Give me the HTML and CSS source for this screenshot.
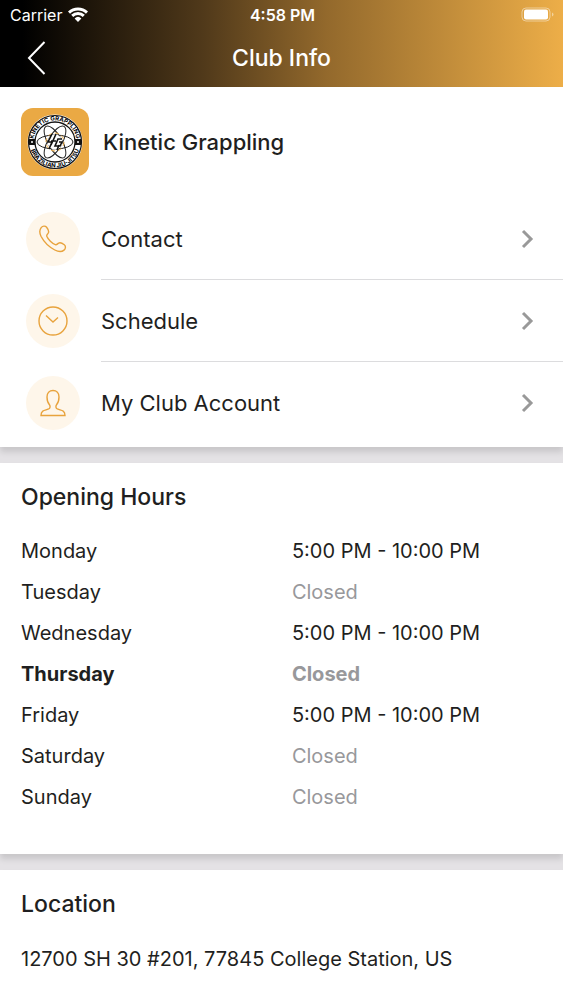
FILE: index.html
```html
<!DOCTYPE html>
<html lang="en">

<head>
    <meta charset="UTF-8">
    <meta name="viewport" content="width=device-width, initial-scale=1">
    <title>Club Info</title>
    <link rel="stylesheet" href="styles.css">
</head>

<body>
    <header>
        <div class="status-bar">
            <div class="carrier">
                <span>Carrier</span>
                <svg width="20" height="15" viewBox="0 0 20 15" fill="none" stroke="#fff" stroke-width="3">
                    <path d="M1 5.6a13 13 0 0 1 18 0M4.2 8.9a8.4 8.4 0 0 1 11.6 0" />
                    <path d="M10 15l-3.4-3.6a5 5 0 0 1 6.8 0z" fill="#fff" stroke="none" />
                </svg>
            </div>
            <time>4:58 PM</time>
            <div class="battery">
                <svg width="34" height="15" viewBox="0 0 34 15">
                    <rect x="1" y="1" width="28" height="13" rx="4" fill="none" stroke="#fff" stroke-opacity=".45" />
                    <rect x="3" y="2.500" width="24" height="10" rx="2" fill="#fff" />
                    <path d="M31 5.5v4q1.500-.5 1.500-2t-1.500-2z" fill="#fff" fill-opacity=".45" />
                </svg>
            </div>
        </div>
        <div class="nav-bar">
            <button class="back" aria-label="Back">
                <svg width="20" height="34" viewBox="0 0 20 34" fill="none" stroke="#fff" stroke-width="2">
                    <path d="M17.500 1L2 17l15.500 16" />
                </svg>
            </button>
            <h1>Club Info</h1>
        </div>
    </header>

    <main>
        <!-- Club -->
        <section class="card">
            <div class="club">
                <svg class="club-logo" viewBox="0 0 68 68">
                    <defs>
                        <path id="ring-top" d="M12.500 34a21.500 21.500 0 0 1 43 0" />
                        <path id="ring-bottom" d="M8.500 34a25.500 25.500 0 0 0 51 0" />
                    </defs>
                    <rect width="68" height="68" rx="12" fill="#eaa944" />
                    <circle cx="34" cy="34" r="27.500" fill="#fff" />
                    <circle cx="34" cy="34" r="26.500" fill="none" stroke="#111" stroke-width="1.200" />
                    <circle cx="34" cy="34" r="20" fill="none" stroke="#111" stroke-width="1.300" />
                    <rect x="8" y="31" width="6" height="6" fill="#111" />
                    <rect x="54" y="31" width="6" height="6" fill="#111" />
                    <circle cx="11" cy="34" r="1" fill="#fff" />
                    <circle cx="57" cy="34" r="1" fill="#fff" />
                    <text class="ring-text"><textPath href="#ring-top" startOffset="50%">KINETIC GRAPPLING</textPath></text>
                    <text class="ring-text"><textPath href="#ring-bottom" startOffset="50%">BRAZILIAN JIU-JITSU</textPath></text>
                    <g fill="none" stroke="#222" stroke-width="1">
                        <ellipse cx="34" cy="34" rx="18" ry="7" />
                        <ellipse cx="34" cy="34" rx="18" ry="7" transform="rotate(60 34 34)" />
                        <ellipse cx="34" cy="34" rx="18" ry="7" transform="rotate(120 34 34)" />
                    </g>
                    <circle cx="34" cy="34" r="7.500" fill="#fff" />
                    <circle cx="34" cy="34" r="9" fill="none" stroke="#eaa944" stroke-dasharray="4 3" />
                    <path d="M31 26l-4 8h4l-3 7M35 26l-5 11M30 33h5M41 31h-4l-3 7h5l2-4h-3M38 37l-2 5" fill="none" stroke="#111" stroke-width="1.600" />
                </svg>
                <h2>Kinetic Grappling</h2>
            </div>
            <nav class="menu">
                <a href="#contact">
                    <span class="icon">
                        <svg width="28" height="28" viewBox="0 0 28 28">
                            <path d="M2.200 2.600C3.700.9 6.200.6 7.600 2.300c1.500 1.900 2.700 4 1.700 5.700-.8 1.300-2 1.900-1.500 3.300 1.200 3.100 5.400 7.200 8.500 8.300 1.500.5 2.100-.8 3.400-1.500 1.800-1 3.700.2 5.600 1.700 1.700 1.400 1.400 3.900-.3 5.300-2.500 2.200-6 1.600-9.200-.1C9.500 21.700 4.800 16.700 2 11.300.6 8.300.2 5 2.200 2.600z" />
                        </svg>
                    </span>
                    <span class="label">Contact
                        <svg class="chevron" width="13" height="20" viewBox="0 0 13 20"><path d="M2 2l8 8-8 8" /></svg>
                    </span>
                </a>
                <a href="#schedule">
                    <span class="icon">
                        <svg width="30" height="30" viewBox="0 0 30 30">
                            <circle cx="15" cy="15" r="14" />
                            <path d="M8 9.500l7 6.500 5-4.500" />
                        </svg>
                    </span>
                    <span class="label">Schedule
                        <svg class="chevron" width="13" height="20" viewBox="0 0 13 20"><path d="M2 2l8 8-8 8" /></svg>
                    </span>
                </a>
                <a href="#account">
                    <span class="icon">
                        <svg width="26" height="28" viewBox="0 0 26 28">
                            <path d="M13 1.500c3.600 0 6 2.600 6 6.500 0 3.200-.8 6-2.600 8-.6.700-.7 2.700.2 3.500 1.700 1.200 4.800 1.500 6.600 2.600 1.300.8 1.800 2.200 1.800 4.400H1c0-2.200.5-3.600 1.800-4.400 1.800-1.100 4.900-1.400 6.600-2.600.9-.8.8-2.800.2-3.500C7.800 14 7 11.200 7 8c0-3.900 2.400-6.500 6-6.500z" />
                        </svg>
                    </span>
                    <span class="label">My Club Account
                        <svg class="chevron" width="13" height="20" viewBox="0 0 13 20"><path d="M2 2l8 8-8 8" /></svg>
                    </span>
                </a>
            </nav>
        </section>

        <!-- Opening hours -->
        <section class="card hours">
            <h2>Opening Hours</h2>
            <table>
                <tr>
                    <th scope="row">Monday</th>
                    <td>5:00 PM - 10:00 PM</td>
                </tr>
                <tr>
                    <th scope="row">Tuesday</th>
                    <td class="closed">Closed</td>
                </tr>
                <tr>
                    <th scope="row">Wednesday</th>
                    <td>5:00 PM - 10:00 PM</td>
                </tr>
                <tr class="today">
                    <th scope="row">Thursday</th>
                    <td class="closed">Closed</td>
                </tr>
                <tr>
                    <th scope="row">Friday</th>
                    <td>5:00 PM - 10:00 PM</td>
                </tr>
                <tr>
                    <th scope="row">Saturday</th>
                    <td class="closed">Closed</td>
                </tr>
                <tr>
                    <th scope="row">Sunday</th>
                    <td class="closed">Closed</td>
                </tr>
            </table>
        </section>

        <!-- Location -->
        <section class="card location">
            <h2>Location</h2>
            <p>12700 SH 30 #201, 77845 College Station, US</p>
        </section>
    </main>
</body>

</html>
```
FILE: styles.css
```css
* {
    box-sizing: border-box;
}

body {
    margin: 0;
    min-height: 100vh;
    display: flex;
    flex-direction: column;
    font-family: Inter, "Liberation Sans", sans-serif;
    font-size: 20px;
    color: #1f1f21;
    background: #fff;
}

svg {
    display: block;
    flex: none;
}

h1,
h2,
p {
    margin: 0;
}

h2 {
    font-size: 23px;
    line-height: 32px;
    font-weight: 500;
}

/* Header */
header {
    color: #fff;
    background: linear-gradient(90deg, #000 4%, #50391a 36%, #93692c 58%, #edae48 100%);
}

.status-bar {
    display: grid;
    grid-template-columns: 1fr auto 1fr;
    align-items: center;
    height: 29px;
    padding: 0 8px 0 10px;
    font-size: 16px;
}

.status-bar time {
    font-weight: 600;
}

.carrier {
    display: flex;
    align-items: center;
    gap: 6px;
}

.battery {
    justify-self: end;
}

.nav-bar {
    display: grid;
    grid-template-columns: 1fr auto 1fr;
    align-items: center;
    height: 58px;
    padding: 0 27px;
}

.back {
    justify-self: start;
    padding: 0;
    border: none;
    background: none;
    cursor: pointer;
}

h1 {
    font-size: 23px;
    line-height: 28px;
    font-weight: 500;
}

/* Sections */
main {
    flex: 1;
    display: flex;
    flex-direction: column;
    gap: 16px;
    background: #e4e2e5;
}

.card {
    background: #fff;
    box-shadow: 0 5px 6px rgba(0, 0, 0, .12);
}

.card:last-child {
    flex: 1;
}

/* Club */
.club {
    display: flex;
    align-items: center;
    gap: 14px;
    height: 109px;
    padding: 0 21px;
}

.club h2 {
    font-size: 22px;
}

.club-logo {
    width: 68px;
    height: 68px;
}

.ring-text {
    font-size: 6px;
    font-weight: 700;
    text-anchor: middle;
}

.menu {
    padding: 2px 0 3px;
}

.menu a {
    display: flex;
    align-items: center;
    gap: 21px;
    height: 82px;
    padding-left: 26px;
    color: inherit;
    font-size: 22px;
    text-decoration: none;
}

.icon {
    display: flex;
    align-items: center;
    justify-content: center;
    flex: none;
    width: 54px;
    height: 54px;
    border-radius: 50%;
    background: #fef6ea;
}

.icon svg {
    fill: none;
    stroke: #e8a33d;
    stroke-width: 1.4;
}

.label {
    display: flex;
    align-items: center;
    justify-content: space-between;
    flex: 1;
    height: 100%;
    padding-right: 29px;
    border-bottom: 1px solid #dcdcde;
}

.menu a:last-child .label {
    border-bottom: none;
}

.chevron {
    fill: none;
    stroke: #999;
    stroke-width: 3;
}

/* Opening hours */
.hours {
    padding: 18px 21px 37px;
}

table {
    width: 100%;
    margin-top: 17px;
    border-collapse: collapse;
    table-layout: fixed;
}

th,
td {
    height: 41px;
    padding: 0;
    font-weight: 400;
    text-align: left;
}

th {
    width: 52%;
}

.today th,
.today td {
    font-weight: 700;
}

.closed {
    color: #98989b;
}

/* Location */
.location {
    padding: 18px 21px 24px;
}

.location p {
    margin-top: 24px;
    line-height: 30px;
}
```
